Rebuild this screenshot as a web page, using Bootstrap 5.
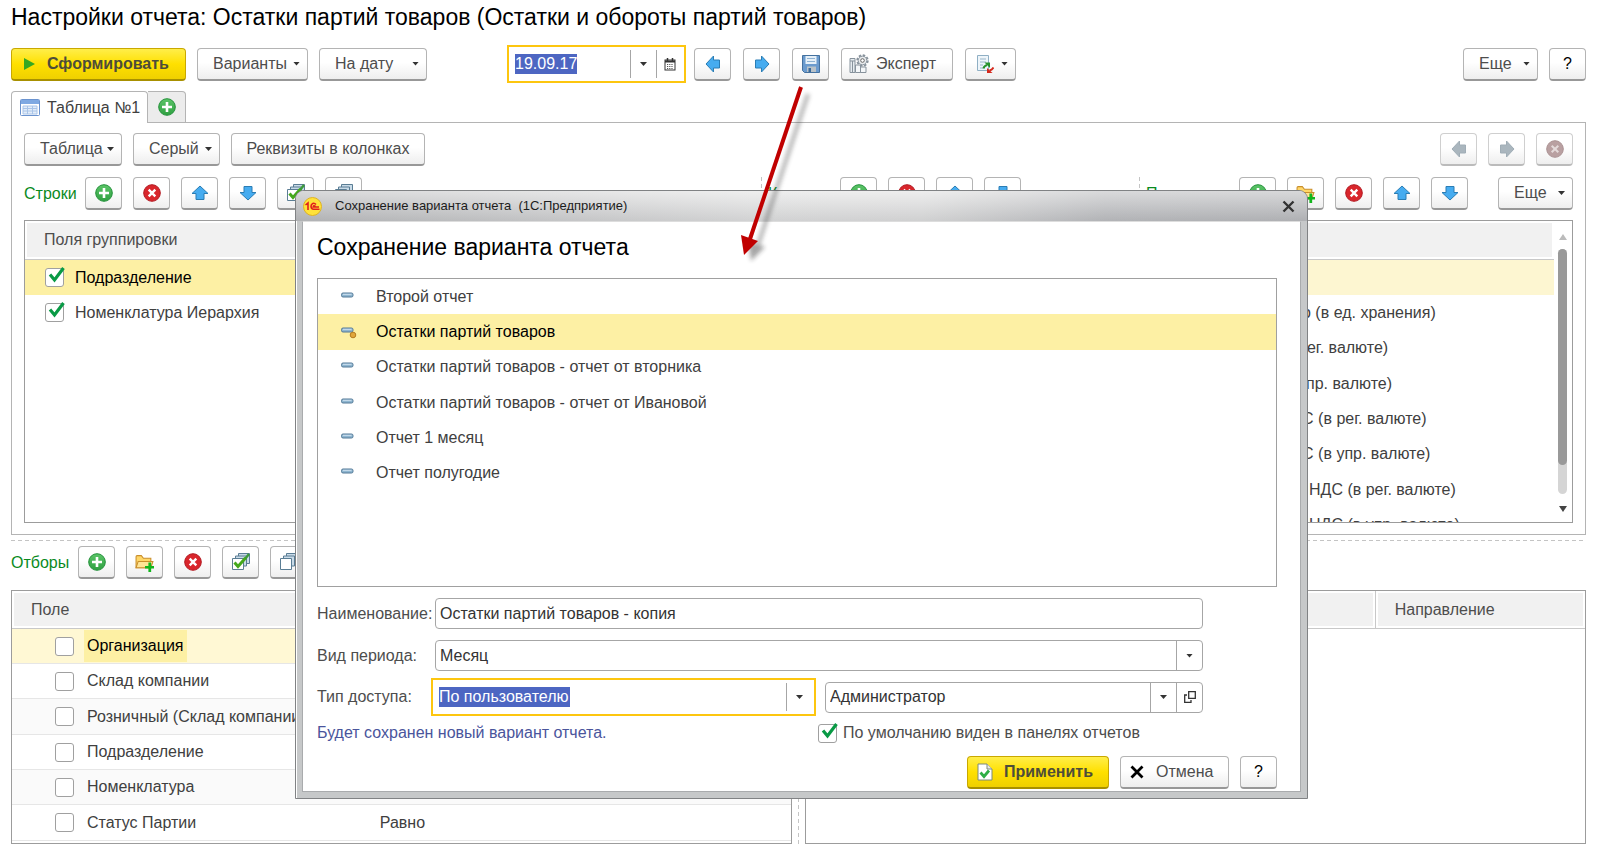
<!DOCTYPE html>
<html lang="ru">
<head>
<meta charset="utf-8">
<meta name="viewport" content="width=device-width, initial-scale=1">
<title>Настройки отчета</title>
<link href="https://cdn.jsdelivr.net/npm/bootstrap@5.3.0/dist/css/bootstrap.min.css" rel="stylesheet">
<style>
body{font-family:"Liberation Sans",Arial,sans-serif;font-size:16px;line-height:20px;color:#404040;background:#fff;padding:0 11px;overflow-x:hidden}
h1,h2{font-size:23px;line-height:34px;color:#000;font-weight:400;margin:0}
svg{flex:none;display:block}
.g11{gap:11px}

/* buttons */
.tool{height:33px;padding:0 15px;border:1px solid #b4b4b4;border-bottom:2px solid #989898;border-radius:4px;background:linear-gradient(#fff 45%,#eee);color:#4d4d4d;font-size:16px;line-height:20px;display:inline-flex;align-items:center;justify-content:center;white-space:nowrap;flex:none}
.tool:disabled{opacity:1;border-color:#cfcfcf;border-bottom-color:#bbb}
.sq{width:37px;padding:0;color:#000}
.dd{padding-right:7px;justify-content:space-between}
.dd::after,.tri{content:"";width:7px;height:4px;background:#333;clip-path:polygon(0 0,100% 0,50% 100%);flex:none}
.main-act{background:linear-gradient(#ffee4a,#ffe000 50%,#efd000);border-color:#c9a800;border-bottom-color:#a89000;color:#4d4d3a;font-weight:700}
.toolbar{margin-top:11px}
#run{width:175px;justify-content:flex-start;gap:12px;padding:0 12px}
#variants{width:111px}
#ondate{width:108px}
#expert{width:112px;padding:0 7px;gap:7px;justify-content:flex-start}
#docbtn{width:51px;padding-left:10px}
#tbl{width:98px}
#gray{width:87px}
#attrs{width:194px}
.more{width:75px}
.midtools{gap:12px;margin-left:-3px}
.after-gap{margin-left:19px}

/* edit fields */
.edit{border:1px solid #a6a6a6;border-radius:4px;height:31px;display:flex;align-items:stretch;background:#fff;color:#333;overflow:hidden;min-width:0}
.edit input,.edit select{border:0;outline:0;background:none;appearance:none;padding:0;margin:0 0 0 4px;color:#333;height:20px;align-self:center;min-width:0;line-height:20px}
.edit .cell{width:26px;border:0;border-left:1px solid #a6a6a6;background:none;padding:0;display:flex;align-items:center;justify-content:center;flex:none}
.edit.active{border:2px solid #fdc60f;border-radius:0;height:38px;padding-right:2px}
.edit.active .cell{margin:3px 0}
.edit.active .chosen{background:#4d66c2;color:#fff;margin-left:6px;flex:none}
.datebox{width:179px;margin-left:69px}
.datebox .chosen{width:62px}
#acc{width:131px}

/* tabs and panel */
.tabs{margin-top:8px}
.tabhead{height:32px;border:1px solid #b4b4b4;border-radius:4px 4px 0 0;background:#fff;padding:0 7px 0 8px;color:#404040;position:relative}
.tabhead.on{border-bottom:0;gap:7px}
.tabhead.add{background:#ececec;border-left:0;border-radius:0 4px 0 0;width:38px;padding:0}
.pane{border:1px solid #b4b4b4;padding:10px 12px 11px;margin-top:-1px}
.toprow{margin-bottom:11px}
.cap{color:#0a8a1e;min-width:0;white-space:nowrap}
.cap-rows{width:50px}
.cap-cols{width:61px}
.cap-sel{width:56px}
.cols3{display:grid;grid-template-columns:minmax(0,731fr) 13px minmax(0,365fr) 13px minmax(0,427fr)}
.cols2{display:grid;grid-template-columns:minmax(0,781fr) 13px minmax(0,781fr)}
.vdash{justify-self:center;width:1px;background:repeating-linear-gradient(#c4c4c4 0 4px,transparent 4px 7px)}
.hdash{height:1px;background:repeating-linear-gradient(90deg,#c4c4c4 0 4px,transparent 4px 7px);margin:5px 0}

/* tables */
.lbox{border:1px solid #9c9c9c;height:303px;margin-top:10px;overflow:hidden}
.grid-t{width:100%;border-collapse:separate;border-spacing:0;table-layout:fixed}
.grid-t th{font-weight:400;background:#f1f1f1;height:38px;border-bottom:1px solid #c8c8c8;padding:0 19px;color:#4d4d4d;box-shadow:inset 0 0 0 2px #fff}
.lbox .grid-t th{height:39px}
.grid-t th+th{border-left:1px solid #c8c8c8}
.grid-t td{padding:0 20px;white-space:nowrap;height:35px}
.grid-t tr:nth-child(3n) td{height:36px}
.grid-t .row-on td{background:#fdf0a4;color:#000}
.grid-t .row-off td{background:#fdf6d1}
.grid-t .ind{padding-left:78px}
.lab{margin-left:11px}
.col-field{width:44%}
.col-dir{width:27%}
.filters{border:1px solid #9c9c9c;height:254px}
.filters-left{margin-top:11px}
.filters tbody td{border-bottom:1px solid #e6e6e6}
.filters .alt td{background:#fafafa}
.filters .cur td{background:#fff8d4;color:#000}
.filters .cur label{background:#fdf0a4}
.filters td:last-child{padding-left:25px}
.fl{display:flex;align-items:center;margin-left:23px}
.fl label{padding:6px 3px;margin-left:10px}
.ck{appearance:none;width:19px;height:19px;border:1px solid #a0a0a0;border-radius:3px;background:#fff;margin:0;position:relative;flex:none;display:block}
.ck:checked::after{content:"";position:absolute;left:1px;top:-3px;width:20px;height:20px;background:url("data:image/svg+xml,%3Csvg xmlns='http://www.w3.org/2000/svg' viewBox='0 0 20 20'%3E%3Cpath d='M3 8.500L7.500 14L16.500 2' fill='none' stroke='%23099a45' stroke-width='3.200'/%3E%3C/svg%3E")}
.bar{width:19px;display:flex;flex-direction:column;align-items:center;padding:13px 0 10px}
.track{width:9px;flex:1;margin:9px 0 12px;background:#d5d5d5;border-radius:5px}
.thumb{height:88%;background:#999;border-radius:5px}

/* dialog */
.dlg{position:absolute;left:295px;right:289px;top:190px;height:609px;background:#c6c8c9;border:1px solid #808284;border-radius:9px 9px 0 0;padding:0 6px 6px;display:flex;flex-direction:column;box-shadow:inset 1px 1px 0 #fff}
.dlg-cap{height:30px;margin:0 -6px;padding:0 12px 0 7px;gap:13px;border-radius:8px 8px 0 0;background:linear-gradient(rgba(255,255,255,.5),rgba(170,172,175,.25)),linear-gradient(90deg,#b2b3b5,#dedede 45%,#dcdcdc 62%,#b4b5b8 80%,#b0b1b4);font-size:13px;color:#1c1c1c}
.dlg-body{background:#fff;border:1px solid #a9abad;border-top-color:#ddd;flex:1;padding:8px 23px 0 14px}
.vars{border:1px solid #a0a0a0;height:309px;margin:14px 0 11px}
.varlist{height:212px;list-style:none;padding:0;margin:0;display:grid;grid-auto-rows:1fr}
.varlist li{display:flex;align-items:center;gap:19px;padding-left:21px}
.varlist .row-on{background:#fdf0a4;color:#000}
.frow{display:grid;grid-template-columns:118px 1fr;align-items:center;margin:0 74px 11px 0;color:#4d4d4d}
.frow.tight{margin-bottom:7px;margin-top:-4px}
.access{display:grid;grid-template-columns:385fr 378fr;gap:9px;margin-left:-4px;align-items:center}
.note{color:#4a559c;flex:0 0 501px}
.notes label{margin-left:6px;color:#4d4d4d}
.foot{margin-top:13px}
#apply{width:142px;padding:0 9px;gap:11px;justify-content:flex-start}
#cancel{width:109px;padding:0 9px;gap:12px;justify-content:flex-start}
.pointer{position:absolute;left:730px;top:80px}
</style>
</head>
<body>
<svg width="0" height="0" class="position-absolute" aria-hidden="true">
<defs>
<linearGradient id="gG" x2="0" y2="1"><stop stop-color="#5cc568"/><stop offset="1" stop-color="#2fa041"/></linearGradient>
<symbol id="plus" viewBox="0 0 18 18"><circle cx="9" cy="9" r="8.300" fill="url(#gG)" stroke="#23913a"/><path d="M9 4v10M4 9h10" stroke="#fff" stroke-width="2.600"/></symbol>
<symbol id="del" viewBox="0 0 18 18"><circle cx="9" cy="9" r="8.300" fill="#d9262c" stroke="#b21a22"/><path d="M5.700 5.700l6.600 6.600M12.300 5.700l-6.600 6.600" stroke="#fff" stroke-width="2.400"/></symbol>
<symbol id="delg" viewBox="0 0 18 18"><circle cx="9" cy="9" r="8.300" fill="#b9a0a1" stroke="#ab9293"/><path d="M5.700 5.700l6.600 6.600M12.300 5.700l-6.600 6.600" stroke="#e4dada" stroke-width="2"/></symbol>
<symbol id="up" viewBox="0 0 18 18"><path d="M9 2L17 9.500H13V15.500H5V9.500H1Z" fill="#46acf0" stroke="#2b7db4" stroke-linejoin="round"/></symbol>
<symbol id="down" viewBox="0 0 18 18"><path d="M9 16L17 8.500H13V2.500H5V8.500H1Z" fill="#46acf0" stroke="#2b7db4" stroke-linejoin="round"/></symbol>
<symbol id="left" viewBox="0 0 18 18"><path d="M2 9L9.500 1V5H15.500V13H9.500V17Z" stroke-linejoin="round"/></symbol>
<symbol id="right" viewBox="0 0 18 18"><path d="M16 9L8.500 1V5H2.500V13H8.500V17Z" stroke-linejoin="round"/></symbol>
<symbol id="stack" viewBox="0 0 18 18"><g fill="#c9dbe8" stroke="#5a7d94"><path d="M6.500.5h11v10h-11z"/><path d="M3.500 3h11v10h-11z"/><path d="M.5 5.500h11v11H.5z" fill="#fff"/></g></symbol>
<symbol id="stackok" viewBox="0 0 18 18"><g fill="#c9dbe8" stroke="#5a7d94"><path d="M6.500.5h11v10h-11z"/><path d="M3.500 3h11v10h-11z"/><path d="M.5 5.500h11v11H.5z" fill="#fff"/></g><path d="M13 6l4-5" stroke="#3c9a3c" stroke-width="2.500"/><path d="M2.500 9.500L6 13.500L13.500 5" fill="none" stroke="#44a81c" stroke-width="3"/></symbol>
<symbol id="fold" viewBox="0 0 18 18"><path d="M1 14V3.500Q1 2.500 2 2.500H6L8 5H15V14Z" fill="#ffd768" stroke="#c98f2c"/><path d="M1 14L3 8H17L15 14Z" fill="#ffe596" stroke="#c98f2c"/><path d="M14 9v9M9.500 13.500h9" stroke="#12b51c" stroke-width="2.600"/></symbol>
<symbol id="dash" viewBox="0 0 18 18"><rect x="2.500" y="5" width="11.500" height="4" rx="1.500" fill="#8fb6d0" stroke="#527896"/><path d="M4 6.300h8.500" stroke="#cfe2ef"/></symbol>
</defs>
</svg>

<h1>Настройки отчета: Остатки партий товаров (Остатки и обороты партий товаров)</h1>

<div class="d-flex align-items-center g11 toolbar">
  <button class="tool main-act" id="run"><svg width="11" height="12" viewBox="0 0 11 12"><path d="M0 0L11 6L0 12Z" fill="#35a822"/></svg>Сформировать</button>
  <button class="tool dd" id="variants">Варианты</button>
  <button class="tool dd" id="ondate">На дату</button>
  <div class="edit active datebox">
    <input class="chosen" value="19.09.17" aria-label="Дата">
    <button class="cell ms-auto" aria-label="Выбрать"><span class="tri"></span></button>
    <button class="cell" aria-label="Календарь"><svg width="12" height="13" viewBox="0 0 12 13"><rect x="1" y="2" width="10" height="10" fill="#fff" stroke="#333"/><path d="M1 3.500h10" stroke="#333" stroke-width="2"/><path d="M3.500 0v3M8.500 0v3" stroke="#333" stroke-width="1.500"/><path d="M3 6.500h6M3 8.500h6M3 10.500h6" stroke="#555" stroke-dasharray="1.200 1"/></svg></button>
  </div>
  <div class="d-flex midtools">
    <button class="tool sq" aria-label="Назад"><svg width="18" height="18" fill="#46acf0" stroke="#2b7db4"><use href="#left"/></svg></button>
    <button class="tool sq" aria-label="Вперед"><svg width="18" height="18" fill="#46acf0" stroke="#2b7db4"><use href="#right"/></svg></button>
    <button class="tool sq" aria-label="Сохранить"><svg width="18" height="18" viewBox="0 0 18 18"><path d="M.5.5h17v17H2.500L.5 15.500Z" fill="#6b9bce" stroke="#44719f"/><path d="M3.500 1h11v8h-11z" fill="#e6f0f8"/><path d="M5 3.500h8M5 6.500h8" stroke="#8eb2d2"/><path d="M5 11.500h9V17H5z" fill="#b9c2c8"/><path d="M6.500 13h2.500v4H6.500z" fill="#3a6a9c"/></svg></button>
    <button class="tool" id="expert"><svg width="20" height="20" viewBox="0 0 20 20" fill="none" stroke="#87929c"><path d="M1 4.500h5v14H1zM1 7h5M3.500 7v11" fill="#e6ecf0"/><path d="M6.500 11h5v7.500h-5zM11.500 13h5.500v5.500h-5.500z" fill="#f4f7f9"/><circle cx="13.500" cy="6.500" r="5.300" stroke-width="1.800" stroke-dasharray="2.500 1.600"/><circle cx="13.500" cy="6.500" r="4.300" fill="#e8ebed"/><circle cx="13.500" cy="6.500" r="1.800" fill="#fff" stroke="#666"/></svg>Эксперт</button>
    <button class="tool dd" id="docbtn" aria-label="Настройки"><svg width="18" height="20" viewBox="0 0 18 20"><path d="M1.500 1.500h11v15h-11z" fill="#eef5fa" stroke="#8fafc4"/><path d="M4 5h6M4 8h6M4 11h3M4 14h3" stroke="#9ab6c9"/><path d="M7.500 14.500Q8 12 11 11" fill="none" stroke="#27922a" stroke-width="2"/><path d="M8.500 8.500H14V14z" fill="#27922a"/><path d="M17.500 13.500Q16 16 13.500 16.500" fill="none" stroke="#d4281c" stroke-width="2"/><path d="M11 14v5h5.500z" fill="#d4281c"/></svg></button>
  </div>
  <button class="tool dd ms-auto more">Еще</button>
  <button class="tool sq" aria-label="Справка">?</button>
</div>

<div class="d-flex tabs">
  <button class="tabhead on d-flex align-items-center"><svg width="20" height="17" viewBox="0 0 20 17"><rect x=".5" y=".5" width="19" height="16" rx="1" fill="#fff" stroke="#6b93cf"/><path d="M1 1h18v4H1z" fill="#7fa9e2"/><path d="M3 7h14v8H3z" fill="#e3edf9" stroke="#a9c4e8"/><path d="M3 9.500h14M3 12h14M7.500 7v8M12.500 7v8" stroke="#a9c4e8"/></svg>Таблица №1</button>
  <button class="tabhead add d-flex align-items-center justify-content-center" aria-label="Добавить"><svg width="18" height="18"><use href="#plus"/></svg></button>
</div>

<section class="pane">
  <div class="d-flex g11 toprow">
    <button class="tool dd" id="tbl">Таблица</button>
    <button class="tool dd" id="gray">Серый</button>
    <button class="tool" id="attrs">Реквизиты в колонках</button>
    <button class="tool sq ms-auto" disabled aria-label="Назад"><svg width="18" height="18" fill="#aab6be" stroke="#a0adb6"><use href="#left"/></svg></button>
    <button class="tool sq" disabled aria-label="Вперед"><svg width="18" height="18" fill="#aab6be" stroke="#a0adb6"><use href="#right"/></svg></button>
    <button class="tool sq" disabled aria-label="Удалить"><svg width="18" height="18"><use href="#delg"/></svg></button>
  </div>
  <div class="cols3">
    <div>
      <div class="d-flex align-items-center g11">
        <span class="cap cap-rows">Строки</span>
        <button class="tool sq" aria-label="Добавить"><svg width="18" height="18"><use href="#plus"/></svg></button>
        <button class="tool sq" aria-label="Удалить"><svg width="18" height="18"><use href="#del"/></svg></button>
        <button class="tool sq" aria-label="Вверх"><svg width="18" height="18"><use href="#up"/></svg></button>
        <button class="tool sq" aria-label="Вниз"><svg width="18" height="18"><use href="#down"/></svg></button>
        <button class="tool sq" aria-label="Отметить все"><svg width="18" height="18"><use href="#stackok"/></svg></button>
        <button class="tool sq" aria-label="Снять отметки"><svg width="18" height="18"><use href="#stack"/></svg></button>
      </div>
      <div class="lbox">
        <table class="grid-t">
          <thead><tr><th>Поля группировки</th></tr></thead>
          <tbody>
            <tr class="row-on"><td><div class="d-flex align-items-center"><input class="ck" type="checkbox" id="g1" checked><label for="g1" class="lab">Подразделение</label></div></td></tr>
            <tr><td><div class="d-flex align-items-center"><input class="ck" type="checkbox" id="g2" checked><label for="g2" class="lab">Номенклатура Иерархия</label></div></td></tr>
          </tbody>
        </table>
      </div>
    </div>
    <div class="vdash"></div>
    <div>
      <div class="d-flex align-items-center g11">
        <span class="cap cap-cols">Колонки</span>
        <button class="tool sq" aria-label="Добавить"><svg width="18" height="18"><use href="#plus"/></svg></button>
        <button class="tool sq" aria-label="Удалить"><svg width="18" height="18"><use href="#del"/></svg></button>
        <button class="tool sq" aria-label="Вверх"><svg width="18" height="18"><use href="#up"/></svg></button>
        <button class="tool sq" aria-label="Вниз"><svg width="18" height="18"><use href="#down"/></svg></button>
      </div>
      <div class="lbox"></div>
    </div>
    <div class="vdash"></div>
    <div>
      <div class="d-flex align-items-center g11">
        <span class="cap me-auto">Показатели</span>
        <button class="tool sq" aria-label="Добавить"><svg width="18" height="18"><use href="#plus"/></svg></button>
        <button class="tool sq" aria-label="Добавить группу"><svg width="19" height="19"><use href="#fold"/></svg></button>
        <button class="tool sq" aria-label="Удалить"><svg width="18" height="18"><use href="#del"/></svg></button>
        <button class="tool sq" aria-label="Вверх"><svg width="18" height="18"><use href="#up"/></svg></button>
        <button class="tool sq" aria-label="Вниз"><svg width="18" height="18"><use href="#down"/></svg></button>
        <button class="tool dd more after-gap">Еще</button>
      </div>
      <div class="lbox d-flex">
        <table class="grid-t flex-grow-1 align-self-start">
          <thead><tr><th></th></tr></thead>
          <tbody>
            <tr class="row-off"><td></td></tr>
            <tr><td class="ind">Количество (в ед. хранения)</td></tr>
            <tr><td class="ind">Сумма (в рег. валюте)</td></tr>
            <tr><td class="ind">Сумма (в упр. валюте)</td></tr>
            <tr><td class="ind">Сумма НДС (в рег. валюте)</td></tr>
            <tr><td class="ind">Сумма НДС (в упр. валюте)</td></tr>
            <tr><td class="ind">Сумма без НДС (в рег. валюте)</td></tr>
            <tr><td class="ind">Сумма без НДС (в упр. валюте)</td></tr>
          </tbody>
        </table>
        <div class="bar">
          <svg width="8" height="6"><path d="M0 6L4 0L8 6Z" fill="#bbb"/></svg>
          <div class="track"><div class="thumb"></div></div>
          <svg width="8" height="6"><path d="M0 0L4 6L8 0Z" fill="#444"/></svg>
        </div>
      </div>
    </div>
  </div>
</section>

<div class="hdash"></div>

<div class="cols2">
  <div>
    <div class="d-flex align-items-center g11">
      <span class="cap cap-sel">Отборы</span>
      <button class="tool sq" aria-label="Добавить"><svg width="18" height="18"><use href="#plus"/></svg></button>
      <button class="tool sq" aria-label="Добавить группу"><svg width="19" height="19"><use href="#fold"/></svg></button>
      <button class="tool sq" aria-label="Удалить"><svg width="18" height="18"><use href="#del"/></svg></button>
      <button class="tool sq" aria-label="Отметить все"><svg width="18" height="18"><use href="#stackok"/></svg></button>
      <button class="tool sq" aria-label="Снять отметки"><svg width="18" height="18"><use href="#stack"/></svg></button>
    </div>
    <div class="filters filters-left">
      <table class="grid-t">
        <colgroup><col class="col-field"><col></colgroup>
        <thead><tr><th colspan="2">Поле</th></tr></thead>
        <tbody>
          <tr class="cur"><td><div class="fl"><input class="ck" type="checkbox" id="f1"><label for="f1">Организация</label></div></td><td></td></tr>
          <tr><td><div class="fl"><input class="ck" type="checkbox" id="f2"><label for="f2">Склад компании</label></div></td><td></td></tr>
          <tr class="alt"><td><div class="fl"><input class="ck" type="checkbox" id="f3"><label for="f3">Розничный (Склад компании)</label></div></td><td></td></tr>
          <tr><td><div class="fl"><input class="ck" type="checkbox" id="f4"><label for="f4">Подразделение</label></div></td><td></td></tr>
          <tr class="alt"><td><div class="fl"><input class="ck" type="checkbox" id="f5"><label for="f5">Номенклатура</label></div></td><td></td></tr>
          <tr><td><div class="fl"><input class="ck" type="checkbox" id="f6"><label for="f6">Статус Партии</label></div></td><td>Равно</td></tr>
        </tbody>
      </table>
    </div>
  </div>
  <div class="vdash"></div>
  <div class="d-flex flex-column justify-content-end">
    <div class="filters">
      <table class="grid-t">
        <colgroup><col><col class="col-dir"></colgroup>
        <thead><tr><th></th><th>Направление</th></tr></thead>
      </table>
    </div>
  </div>
</div>

<div class="dlg" role="dialog" aria-labelledby="dt">
  <div class="dlg-cap d-flex align-items-center">
    <svg width="19" height="19" viewBox="0 0 19 19"><circle cx="9.500" cy="9.500" r="9" fill="#ffe23a" stroke="#e0b420"/><path d="M2.500 8L5 6v7M13 7.500Q11.500 5.800 9.800 6.400Q8 7.200 8 9.300Q8.200 12.300 10.500 12.300H16.500M12.500 9.300Q10.500 8 10.200 10H16" fill="none" stroke="#e0201c" stroke-width="1.600"/></svg>
    <span id="dt">Сохранение варианта отчета &nbsp;(1С:Предприятие)</span>
    <button class="ms-auto border-0 bg-transparent p-0" aria-label="Закрыть"><svg width="13" height="13" viewBox="0 0 13 13"><path d="M1.500 1.500l10 10M11.500 1.500l-10 10" stroke="#333" stroke-width="2.400"/></svg></button>
  </div>
  <div class="dlg-body">
    <h2>Сохранение варианта отчета</h2>
    <div class="vars">
      <ul class="varlist">
        <li><svg width="18" height="18"><use href="#dash"/></svg>Второй отчет</li>
        <li class="row-on"><svg width="18" height="18"><use href="#dash"/><circle cx="14" cy="12" r="2.800" fill="#e0a63a" stroke="#b57c20"/></svg>Остатки партий товаров</li>
        <li><svg width="18" height="18"><use href="#dash"/></svg>Остатки партий товаров - отчет от вторника</li>
        <li><svg width="18" height="18"><use href="#dash"/></svg>Остатки партий товаров - отчет от Ивановой</li>
        <li><svg width="18" height="18"><use href="#dash"/></svg>Отчет 1 месяц</li>
        <li><svg width="18" height="18"><use href="#dash"/></svg>Отчет полугодие</li>
      </ul>
    </div>
    <div class="frow"><label for="nm">Наименование:</label><div class="edit"><input id="nm" class="flex-grow-1" value="Остатки партий товаров - копия"></div></div>
    <div class="frow"><label for="per">Вид периода:</label><div class="edit"><select id="per" class="flex-grow-1"><option>Месяц</option></select><span class="cell"><span class="tri"></span></span></div></div>
    <div class="frow tight"><label for="acc">Тип доступа:</label>
      <div class="access">
        <div class="edit active"><select id="acc" class="chosen"><option>По пользователю</option></select><span class="cell ms-auto"><span class="tri"></span></span></div>
        <div class="edit"><input class="flex-grow-1" value="Администратор" aria-label="Пользователь"><button class="cell" aria-label="Выбрать"><span class="tri"></span></button><button class="cell" aria-label="Открыть"><svg width="12" height="12" viewBox="0 0 12 12" fill="none" stroke="#333" stroke-width="1.300"><path d="M4.700.7h6.600v6.600H4.700zM3 4H.7v7.300H7V9"/></svg></button></div>
      </div>
    </div>
    <div class="d-flex align-items-center notes"><span class="note">Будет сохранен новый вариант отчета.</span><input class="ck" type="checkbox" id="def" checked><label for="def">По умолчанию виден в панелях отчетов</label></div>
    <div class="d-flex justify-content-end g11 foot">
      <button class="tool main-act" id="apply"><svg width="16" height="18" viewBox="0 0 16 18"><path d="M1 1h9l5 5v11H1Z" fill="#fff" stroke="#7d8a7a"/><path d="M10 1v5h5" fill="#e8e8e8" stroke="#7d8a7a"/><path d="M3.500 9.500L7 13.500L12 7.500" fill="none" stroke="#2eae45" stroke-width="2.800"/></svg>Применить</button>
      <button class="tool" id="cancel"><svg width="14" height="14" viewBox="0 0 14 14"><path d="M1.500 1.500l11 11M12.500 1.500l-11 11" stroke="#000" stroke-width="2.800"/></svg>Отмена</button>
      <button class="tool sq" aria-label="Справка">?</button>
    </div>
  </div>
</div>

<svg class="pointer" width="90" height="190" viewBox="730 80 90 190" aria-hidden="true">
  <defs><filter id="soft" x="-50%" y="-20%" width="200%" height="140%"><feGaussianBlur stdDeviation="2"/></filter></defs>
  <g filter="url(#soft)" opacity=".4" transform="translate(7 6)"><path d="M801 88L751 239" stroke="#444" stroke-width="4"/><path d="M744 255L741 235L758 241Z" fill="#222"/></g>
  <path d="M801 87L750 239" stroke="#c00000" stroke-width="4"/><path d="M744 255L741 235L758 241Z" fill="#c00000"/>
</svg>

<script src="https://cdn.jsdelivr.net/npm/bootstrap@5.3.0/dist/js/bootstrap.bundle.min.js"></script>
</body>
</html>
